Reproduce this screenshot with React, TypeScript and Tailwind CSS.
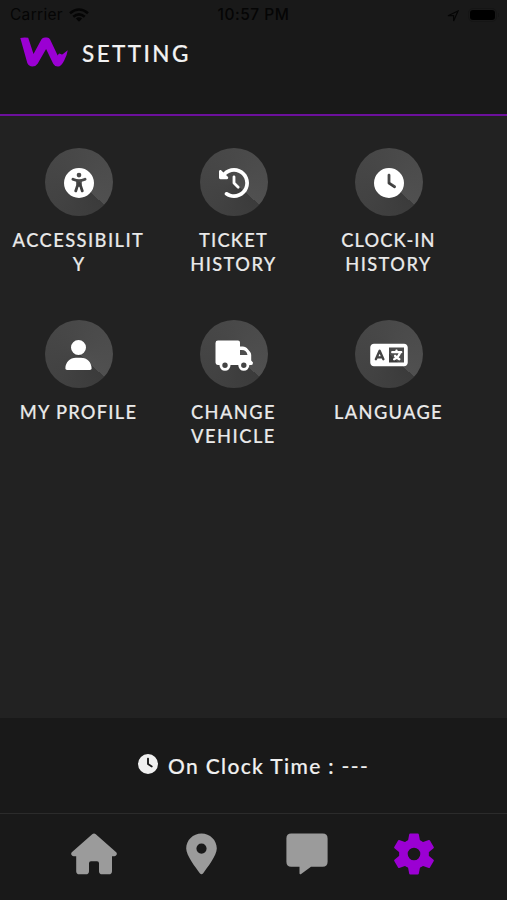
import type { ReactNode } from "react";
import { FaClock, FaClockRotateLeft, FaLanguage, FaUniversalAccess, FaUser } from "react-icons/fa6";

type Line = { text: string; tracking: string };

function TruckIcon() {
  return (
    <svg viewBox="0 0 38 31" className="h-[31px] w-[38px]">
      <path
        fill="#fff"
        fillRule="evenodd"
        d="M3 .6H23Q25 .6 25 2.6V6.4H28Q30.3 6.4 31.8 8L35 11.8Q36.2 13.2 36.2 15V20.5L38 22.5Q38 25 36.3 25H2.8Q.5 25 .5 22.6V3Q.5 .6 3 .6ZM25 10V15H32.5Q31.5 10 26.8 10Z"
      />
      <circle cx="10" cy="25.3" r="4.1" fill="#444" stroke="#fff" strokeWidth="2.8" />
      <circle cx="28.8" cy="25.3" r="4.1" fill="#444" stroke="#fff" strokeWidth="2.8" />
    </svg>
  );
}

function Logo() {
  return (
    <svg viewBox="0 0 48 30" className="h-[30px] w-12">
      <path
        fill="#9b00d3"
        d="M.3 1.1Q4-.1 8.2.8L13.5 17 21.5 2.3Q22.5.4 25 .4H27Q29.2.4 30.1 2.4L37.7 18.4Q39 15.6 40.6 17 42.2 18.2 43.6 16.4L47.7 13.2Q47.2 17.5 44.2 23.5 41.2 29.7 37.8 29.5 34.6 29.4 33.2 26.7L26.1 12 17.6 26.7Q15.8 29.5 12.5 29.5 8.7 29.4 7.3 26Z"
      />
    </svg>
  );
}

function WifiIcon() {
  return (
    <svg viewBox="0 0 20 14" className="h-[14px] w-5" fill="none" stroke="#050505" strokeWidth="2.6">
      <path d="M1 5.2Q10-2.2 19 5.2M4.3 8.7Q10 4 15.7 8.7" />
      <path d="M6.8 10.6Q10 8 13.2 10.6L10 13.8Z" fill="#050505" stroke="none" />
    </svg>
  );
}

function HouseIcon() {
  return (
    <svg viewBox="0 0 46 42" className="h-[42px] w-[46px]" fill="currentColor">
      <path d="M21.2 1.2Q23-.2 24.8 1.2L45.2 19.2Q46.2 20.3 45.6 21.8 45 23.2 43.4 23.2H41V38.2Q41 41.3 37.8 41.3H31.2Q28 41.3 28 38.2V30.3Q28 28.3 26 28.3H20Q18 28.3 18 30.3V38.2Q18 41.3 14.8 41.3H8.4Q5.2 41.3 5.2 38.2V23.2H2.6Q1 23.2.4 21.8-.2 20.3.8 19.2Z" />
    </svg>
  );
}

function PinIcon() {
  return (
    <svg viewBox="0 0 31 42" className="ml-[69px] h-[42px] w-[31px]" fill="currentColor">
      <path
        fillRule="evenodd"
        d="M15.5.4C24 .4 30.8 7 30.8 15.6 30.8 22.5 21.5 34.5 17.2 40.2Q15.5 42.4 13.8 40.2C9.5 34.5.2 22.5.2 15.6.2 7 7 .4 15.5.4ZM15.5 10.5A5.1 5.1 0 1 0 15.5 20.7 5.1 5.1 0 1 0 15.5 10.5Z"
      />
    </svg>
  );
}

function ChatIcon() {
  return (
    <svg viewBox="0 0 42 42" className="ml-[69px] size-[42px]" fill="currentColor">
      <path d="M5.2.4H36.6Q41.6.4 41.6 5.4V28.8Q41.6 33.8 36.6 33.8H25L14.8 41.2Q13.5 41.8 13.5 40.2V33.8H5.2Q.4 33.8.4 28.8V5.4Q.4.4 5.2.4Z" />
    </svg>
  );
}

function GearIcon() {
  return (
    <svg viewBox="0 0 42 42" className="ml-[65px] size-[42px] text-[#9b00d3]">
      <g fill="currentColor" stroke="currentColor" strokeWidth="2" strokeLinejoin="round">
        {[0, 60, 120, 180, 240, 300].map((angle) => (
          <path key={angle} d="M15.7 9.5 17.2 1.4H24.8L26.3 9.5Z" transform={`rotate(${angle} 21 21)`} />
        ))}
      </g>
      <circle cx="21" cy="21" r="10.6" fill="none" stroke="currentColor" strokeWidth="8.6" />
    </svg>
  );
}

function Tile({ icon, lines }: { icon: ReactNode; lines: Line[] }) {
  return (
    <div className="flex h-[172.5px] w-[155px] flex-col items-center">
      <div className="flex size-[68px] items-center justify-center rounded-full bg-[conic-gradient(from_132deg,#3b3b3b,#424242_25%,#484848_60%,#505050)] pt-0.5 text-white">
        {icon}
      </div>
      <div className="mt-3 flex flex-col items-center text-[18.3px] leading-[24.4px] font-medium text-[#e9e9e9] [-webkit-text-stroke:0.15px_#e9e9e9]">
        {lines.map((l) => (
          <span key={l.text} className={`whitespace-nowrap ${l.tracking}`}>
            {l.text}
          </span>
        ))}
      </div>
    </div>
  );
}

export default function App() {
  return (
    <div className="flex h-[900px] w-[507px] flex-col overflow-hidden bg-[#222] font-['Lato','Open_Sans',sans-serif]">
      <header className="h-[116px] border-b-2 border-[#6c109c] bg-[#191919]">
        <div className="grid h-[29px] grid-cols-3 items-center px-[10px] font-['Inter',sans-serif] text-[15.5px] text-[#050505]">
          <div className="flex items-center gap-[6px]">
            <span className="tracking-[0.3px]">Carrier</span>
            <WifiIcon />
          </div>
          <span className="text-center font-medium tracking-[0.5px] whitespace-nowrap">10:57 PM</span>
          <div className="-mr-0.5 flex items-center justify-end gap-[9px]">
            <svg viewBox="0 0 12 12" className="mt-0.5 size-3">
              <path d="M1 5.7 11 1 6.6 11V5.7Z" fill="none" stroke="#050505" strokeWidth="1.2" />
            </svg>
            <div className="flex items-center gap-px">
              <div className="rounded-[5px] border border-[#151515] p-px">
                <div className="h-[10px] w-[25px] rounded-[3px] bg-black" />
              </div>
              <div className="h-1 w-px bg-[#151515]" />
            </div>
          </div>
        </div>
        <div className="flex items-start pt-2 pl-5">
          <Logo />
          <h1 className="mt-[2px] ml-[14px] text-[22.5px] leading-[30px] font-medium tracking-[2.4px] text-[#f2f2f2] [-webkit-text-stroke:0.15px_#f2f2f2]">
            SETTING
          </h1>
        </div>
      </header>

      <main className="flex h-[602px] flex-wrap content-start pt-[31.5px] pl-[1px]">
        <Tile
          icon={<FaUniversalAccess className="size-[30px]" />}
          lines={[
            { text: "ACCESSIBILIT", tracking: "tracking-[1.45px]" },
            { text: "Y", tracking: "tracking-normal" },
          ]}
        />
        <Tile
          icon={<FaClockRotateLeft className="size-[30px]" />}
          lines={[
            { text: "TICKET", tracking: "tracking-[1.2px]" },
            { text: "HISTORY", tracking: "tracking-[1.4px]" },
          ]}
        />
        <Tile
          icon={<FaClock className="size-[30px]" />}
          lines={[
            { text: "CLOCK-IN", tracking: "tracking-[1.1px]" },
            { text: "HISTORY", tracking: "tracking-[1.4px]" },
          ]}
        />
        <Tile
          icon={<FaUser className="h-[30px] w-[27px]" />}
          lines={[{ text: "MY PROFILE", tracking: "tracking-[1.25px]" }]}
        />
        <Tile
          icon={<TruckIcon />}
          lines={[
            { text: "CHANGE", tracking: "tracking-[1.4px]" },
            { text: "VEHICLE", tracking: "tracking-[1.5px]" },
          ]}
        />
        <Tile
          icon={<FaLanguage className="h-[30px] w-[38px]" />}
          lines={[{ text: "LANGUAGE", tracking: "tracking-[1.3px]" }]}
        />
      </main>

      <section className="flex h-[95px] items-center justify-center bg-[#191919] text-[#f0f0f0]">
        <FaClock className="mb-1 size-5" />
        <span className="ml-[10px] text-[21px] leading-7 font-medium tracking-[1.35px] whitespace-nowrap [-webkit-text-stroke:0.15px_#f0f0f0]">
          On Clock Time : ---
        </span>
      </section>

      <nav className="flex h-[87px] items-start border-t border-[#2b2b2b] bg-[#191919] pt-[19px] pl-[71px] text-[#9b9b9b]">
        <HouseIcon />
        <PinIcon />
        <ChatIcon />
        <GearIcon />
      </nav>
    </div>
  );
}
